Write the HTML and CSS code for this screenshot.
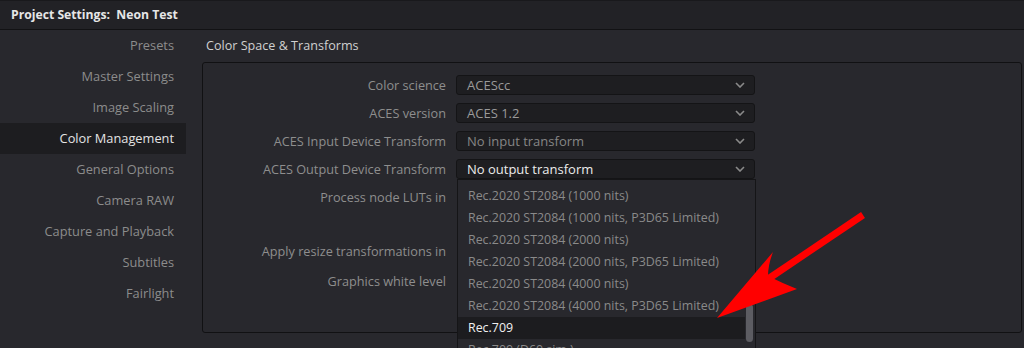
FILE: index.html
```html
<!DOCTYPE html>
<html>
<head>
<meta charset="utf-8">
<link rel="stylesheet" href="styles.css">
</head>
<body>
<div class="window">
  <header class="titlebar">Project Settings:&nbsp; Neon Test</header>
  <div class="main">
    <nav class="sidebar">
      <div class="nav-item">Presets</div>
      <div class="nav-item">Master Settings</div>
      <div class="nav-item">Image Scaling</div>
      <div class="nav-item active">Color Management</div>
      <div class="nav-item">General Options</div>
      <div class="nav-item">Camera RAW</div>
      <div class="nav-item">Capture and Playback</div>
      <div class="nav-item">Subtitles</div>
      <div class="nav-item">Fairlight</div>
    </nav>
    <section class="content">
      <h2 class="section-title">Color Space &amp; Transforms</h2>
      <div class="panel">
        <div class="row">
          <span class="label">Color science</span>
          <div class="select"><span class="value">ACEScc</span><svg class="chev" viewBox="0 0 10 6"><path d="M1 1 L5 5 L9 1"/></svg></div>
        </div>
        <div class="row">
          <span class="label">ACES version</span>
          <div class="select"><span class="value">ACES 1.2</span><svg class="chev" viewBox="0 0 10 6"><path d="M1 1 L5 5 L9 1"/></svg></div>
        </div>
        <div class="row">
          <span class="label">ACES Input Device Transform</span>
          <div class="select"><span class="value dim">No input transform</span><svg class="chev" viewBox="0 0 10 6"><path d="M1 1 L5 5 L9 1"/></svg></div>
        </div>
        <div class="row">
          <span class="label">ACES Output Device Transform</span>
          <div class="select open"><span class="value bright">No output transform</span><svg class="chev" viewBox="0 0 10 6"><path d="M1 1 L5 5 L9 1"/></svg>
            <div class="menu">
              <div class="menu-item">Rec.2020 ST2084 (1000 nits)</div>
              <div class="menu-item">Rec.2020 ST2084 (1000 nits, P3D65 Limited)</div>
              <div class="menu-item">Rec.2020 ST2084 (2000 nits)</div>
              <div class="menu-item">Rec.2020 ST2084 (2000 nits, P3D65 Limited)</div>
              <div class="menu-item">Rec.2020 ST2084 (4000 nits)</div>
              <div class="menu-item">Rec.2020 ST2084 (4000 nits, P3D65 Limited)</div>
              <div class="menu-item selected">Rec.709</div>
              <div class="menu-item">Rec.709 (D60 sim.)</div>
              <div class="scrollbar"></div>
            </div>
          </div>
        </div>
        <div class="row">
          <span class="label">Process node LUTs in</span>
        </div>
        <div class="row spacer"></div>
        <div class="row">
          <span class="label">Apply resize transformations in</span>
        </div>
        <div class="row gap-more">
          <span class="label">Graphics white level</span>
        </div>
      </div>
    </section>
  </div>
  <svg class="annot" viewBox="0 0 1024 348" width="1024" height="348">
    <line x1="863" y1="215" x2="768" y2="279" stroke="#ff0000" stroke-width="7"/>
    <path d="M717 318 L773 252 Q768 265 768 276 Q782 283 797 289 Z" fill="#ff0000"/>
  </svg>
</div>
</body>
</html>
```

FILE: styles.css
```css
html, body {
  margin: 0;
  padding: 0;
}
body {
  background: #28282d;
  font-family: "Open Sans", "Noto Sans", "Liberation Sans", sans-serif;
  font-size: 13px;
  width: 1024px;
  height: 348px;
  overflow: hidden;
}
.window {
  position: relative;
  width: 1024px;
  height: 348px;
  overflow: hidden;
}
.titlebar {
  height: 30px;
  box-sizing: border-box;
  border-top: 1px solid #19191c;
  border-bottom: 1px solid #121214;
  background: #222226;
  color: #e6e6e6;
  font-weight: 700;
  font-size: 12.2px;
  line-height: 27px;
  padding-left: 11px;
}
.main {
  display: flex;
  align-items: flex-start;
}
.sidebar {
  width: 186px;
  flex: none;
  display: flex;
  flex-direction: column;
}
.nav-item {
  height: 31px;
  line-height: 31px;
  text-align: right;
  padding-right: 12px;
  color: #8c8c8c;
  font-size: 12.8px;
}
.nav-item.active {
  background: #1d1d20;
  color: #e4e4e4;
}
.content {
  flex: 1;
  padding-left: 16px;
  padding-right: 2px;
}
.section-title {
  margin: 0;
  height: 31px;
  line-height: 31px;
  font-size: 12.6px;
  font-weight: 400;
  color: #d0d0d0;
  padding-left: 4px;
}
.panel {
  margin-top: 1px;
  height: 271px;
  box-sizing: border-box;
  border: 1px solid #111113;
  border-radius: 3px;
  background: #28282d;
  padding-top: 12px;
  display: flex;
  flex-direction: column;
  gap: 8px;
}
.row {
  height: 20px;
  display: flex;
  align-items: center;
}
.row.spacer {
  height: 18px;
}
.row.gap-more {
  margin-top: 2px;
}
.label {
  width: 243px;
  flex: none;
  text-align: right;
  color: #8e8e8e;
  line-height: 20px;
  font-size: 12.7px;
}
.select {
  position: relative;
  margin-left: 10px;
  width: 299px;
  height: 20px;
  box-sizing: border-box;
  background: #1e1e21;
  border: 1px solid #141416;
  border-radius: 3px;
  display: flex;
  align-items: center;
  padding-left: 10px;
}
.value {
  flex: 1;
  color: #9a9a9a;
  line-height: 18px;
}
.value.dim {
  color: #868686;
}
.value.bright {
  color: #ececec;
}
.chev {
  width: 10px;
  height: 6px;
  margin-right: 9px;
  fill: none;
  stroke: #8a8a8a;
  stroke-width: 1.6;
}
.menu {
  position: absolute;
  top: 19px;
  left: 0;
  width: 299px;
  height: 200px;
  box-sizing: border-box;
  background: #28282d;
  border: 1px solid #151517;
  padding-top: 5px;
  z-index: 5;
}
.menu-item {
  height: 22px;
  line-height: 22px;
  padding-left: 10px;
  margin-right: 10px;
  color: #8a8a8a;
  white-space: nowrap;
  font-size: 12.4px;
}
.menu-item.selected {
  background: #1c1c1f;
  color: #f0f0f0;
}
.scrollbar {
  position: absolute;
  right: 2px;
  top: 124px;
  width: 7px;
  height: 38px;
  border-radius: 4px;
  background: #5c5c62;
}
.annot {
  position: absolute;
  left: 0;
  top: 0;
  pointer-events: none;
  z-index: 10;
}
```
